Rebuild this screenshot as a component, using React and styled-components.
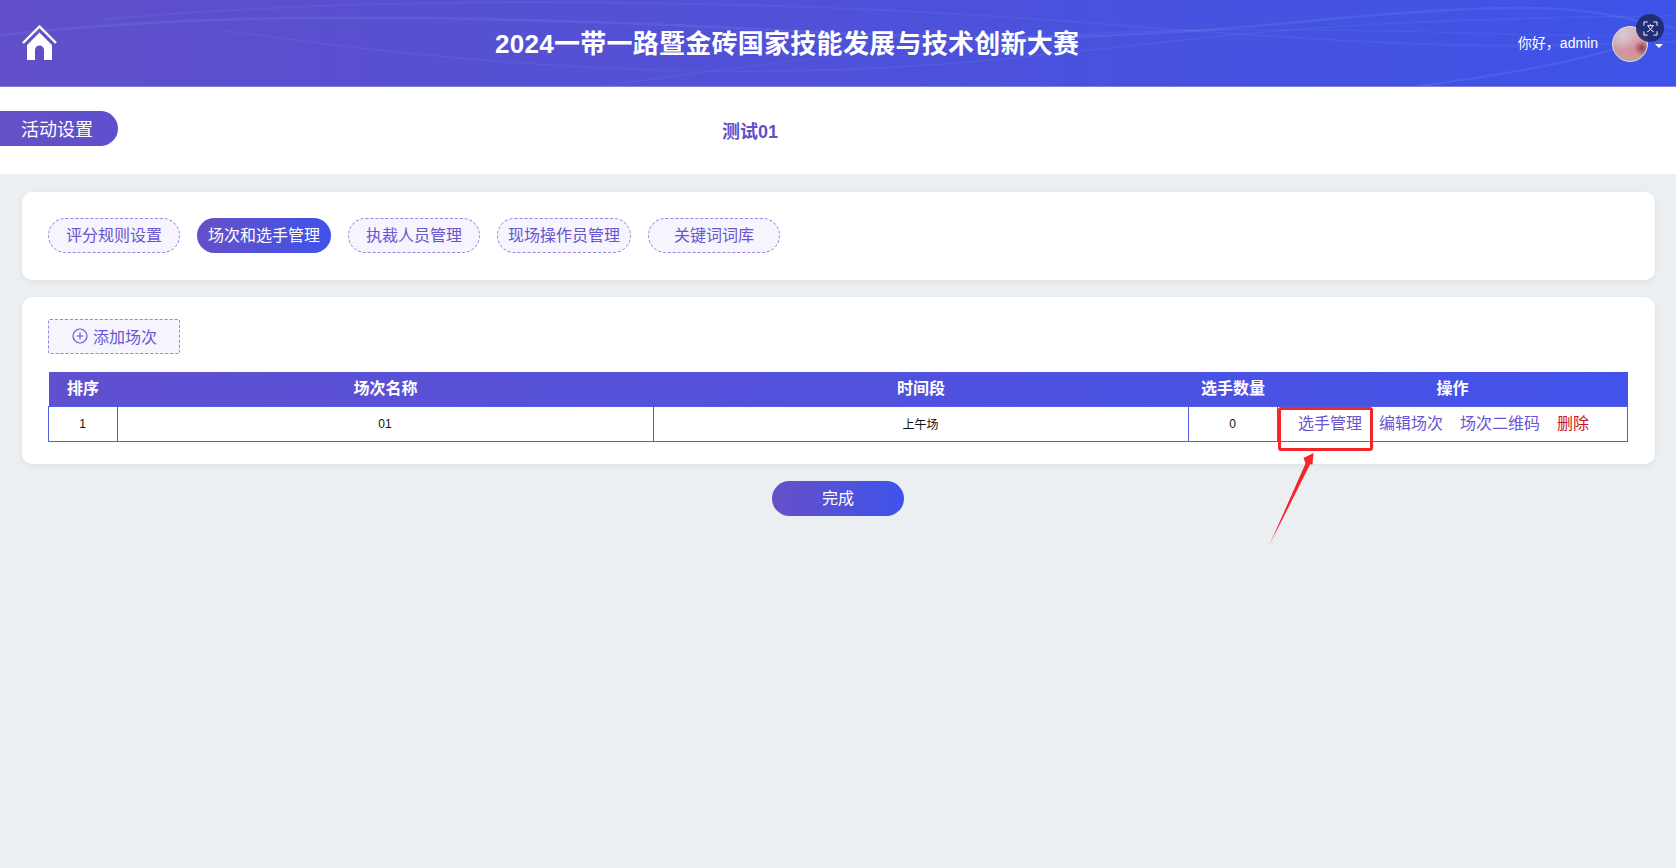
import React from 'react';
import styled, { createGlobalStyle } from 'styled-components';

const GlobalStyle = createGlobalStyle`
  html, body {
    margin: 0;
    padding: 0;
    background: #ebeff2;
    font-family: "Liberation Sans", "Noto Sans CJK SC", sans-serif;
  }
  * { box-sizing: border-box; }
`;

const GRADIENT = 'linear-gradient(90deg, #6650c8 0%, #3f53ea 100%)';

const Page = styled.div`
  width: 1676px;
  height: 868px;
  overflow: hidden;
  position: relative;
  background: #ebeff2;
`;

const Header = styled.header`
  position: relative;
  height: 87px;
  background: linear-gradient(90deg, #614fc9 0%, #3d53e8 100%);
  border-bottom: 1px solid #7f80e4;
  display: flex;
  align-items: center;
  padding: 0 13px 0 22px;
  overflow: hidden;
`;

const Waves = styled.svg`
  position: absolute;
  inset: 0;
  width: 100%;
  height: 100%;
  pointer-events: none;
`;

const HomeLink = styled.a`
  width: 35px;
  height: 36px;
  margin-top: -1px;
  display: block;
  flex: none;
  position: relative;
`;

const Title = styled.h1`
  position: relative;
  margin: 0 0 4px 438px;
  font-size: 26px;
  letter-spacing: 0.27px;
  font-weight: 700;
  color: #fff;
  white-space: nowrap;
`;

const UserArea = styled.div`
  position: relative;
  margin-left: auto;
  display: flex;
  align-items: center;
  color: #fff;
  font-size: 14px;
`;

const Greeting = styled.span`
  margin-bottom: 3px;
`;

const Avatar = styled.div`
  width: 36px;
  height: 36px;
  margin: 2px 0 0 14px;
  border-radius: 50%;
  border: 1px solid #e6dfe6;
  background:
    radial-gradient(circle at 85% 62%, #8c3f4c 0%, transparent 22%),
    radial-gradient(circle at 30% 25%, #d3ccd2 0%, transparent 45%),
    radial-gradient(circle at 55% 65%, #d98ea0 0%, transparent 55%),
    linear-gradient(180deg, #d8b8bf 0%, #cf98a6 65%, #b4ab8c 100%);
`;

const Caret = styled.span`
  width: 0;
  height: 0;
  margin: 6px 0 0 7px;
  border-left: 4px solid transparent;
  border-right: 4px solid transparent;
  border-top: 4px solid #fff;
`;

const FloatingBadge = styled.div`
  position: absolute;
  left: 1636px;
  top: 14px;
  width: 28px;
  height: 28px;
  border-radius: 50%;
  background: rgba(30, 42, 110, 0.92);
  display: flex;
  align-items: center;
  justify-content: center;
`;

const TitleBand = styled.section`
  height: 87px;
  background: #fff;
  padding-top: 24px;
  display: flex;
  align-items: flex-start;
`;

const SectionPill = styled.div`
  width: 118px;
  height: 35px;
  padding: 2px 0 0 21px;
  border-radius: 0 18px 18px 0;
  background: linear-gradient(90deg, #6650c8, #5d50cd);
  color: #fff;
  font-size: 18px;
  line-height: 35px;
`;

const ActivityName = styled.div`
  margin: 9px 0 0 604px;
  font-size: 18px;
  font-weight: 700;
  color: #5f50cb;
  line-height: 24px;
`;

const Main = styled.main`
  padding: 18px 21px 0 22px;
  display: flex;
  flex-direction: column;
  gap: 17px;
`;

const Card = styled.section`
  background: #fff;
  border-radius: 10px;
  box-shadow: 0 2px 6px rgba(0, 0, 0, 0.06);
  padding: ${p => p.$padding};
`;

const TabRow = styled.div`
  display: flex;
  gap: 17px;
`;

const Tab = styled.button`
  height: 35px;
  width: ${p => p.$width}px;
  padding: 0 0 3px;
  border-radius: 18px;
  font: inherit;
  font-size: 16px;
  cursor: pointer;
  color: ${p => (p.$active ? '#fff' : '#6a55d0')};
  background: ${p => (p.$active ? GRADIENT : '#f6f4fd')};
  border: ${p => (p.$active ? 'none' : '1px dashed #9a84e0')};
`;

const AddButton = styled.button`
  width: 132px;
  height: 35px;
  padding: 0 0 1px 1px;
  display: flex;
  align-items: center;
  justify-content: center;
  gap: 5px;
  font: inherit;
  font-size: 16px;
  color: #6a55d0;
  background: #f6f4fd;
  border: 1px dashed #9a84e0;
  border-radius: 2px;
  cursor: pointer;
`;

const Table = styled.table`
  width: 1579px;
  margin-top: 18px;
  border-collapse: collapse;
  table-layout: fixed;
`;

const HeadRow = styled.tr`
  height: 34px;
  background: linear-gradient(90deg, #6050d0 0%, #4353ea 100%);
`;

const Th = styled.th`
  padding: 0 0 3px 0;
  color: #fff;
  font-size: 16px;
  font-weight: 700;
  text-align: center;
`;

const Td = styled.td`
  height: 35px;
  padding: 0 1px 0 0;
  border: 1px solid #4f5fe0;
  font-size: 12px;
  color: #111;
  text-align: center;
`;

const OpsCell = styled.div`
  display: flex;
  gap: 17px;
  margin-top: -3px;
  padding-left: 20px;
  font-size: 16px;
`;

const OpLink = styled.a`
  color: ${p => (p.$danger ? '#c8171e' : '#6a55d0')};
  cursor: pointer;
  white-space: nowrap;
`;

const Footer = styled.div`
  display: flex;
  justify-content: center;
  padding-right: 1px;
`;

const DoneButton = styled.button`
  width: 132px;
  height: 35px;
  padding: 0 0 3px;
  border: none;
  border-radius: 18px;
  background: ${GRADIENT};
  color: #fff;
  font: inherit;
  font-size: 16px;
  cursor: pointer;
`;

const Highlight = styled.div`
  position: absolute;
  left: 1278px;
  top: 407px;
  width: 95px;
  height: 44px;
  border: 3px solid #f5262a;
  border-radius: 3px;
  pointer-events: none;
`;

const Arrow = styled.svg`
  position: absolute;
  left: 1260px;
  top: 448px;
  width: 70px;
  height: 100px;
  pointer-events: none;
`;

const tabs = [
  { label: '评分规则设置', width: 132 },
  { label: '场次和选手管理', width: 134, active: true },
  { label: '执裁人员管理', width: 132 },
  { label: '现场操作员管理', width: 134 },
  { label: '关键词词库', width: 132 },
];

export default function App() {
  return (
    <Page>
      <GlobalStyle />
      <Header>
        <Waves viewBox="0 0 1676 87" preserveAspectRatio="none" fill="none">
          <path d="M0 36 C200 12 420 16 640 24 S1000 52 1300 22 S1600 18 1676 28" stroke="#7fa8f4" strokeOpacity="0.16" strokeWidth="2.5" />
          <path d="M100 20 C400 -8 800 0 1100 24 S1500 50 1676 42" stroke="#7fa8f4" strokeOpacity="0.1" strokeWidth="2" />
          <path d="M220 30 C500 72 760 84 1000 60 S1300 20 1676 16" stroke="#7fa8f4" strokeOpacity="0.12" strokeWidth="1.5" />
          <path d="M600 87 C800 60 1000 30 1240 30 S1560 40 1676 34" stroke="#7fa8f4" strokeOpacity="0.1" strokeWidth="1.5" />
          <path d="M1420 87 C1500 76 1560 66 1620 48" stroke="#7fa8f4" strokeOpacity="0.18" strokeWidth="2" />
        </Waves>
        <HomeLink>
          <svg width="35" height="36" viewBox="0 0 35 36">
            <path d="M1 18 L17.5 1.5 L34 18" fill="none" stroke="#fff" strokeWidth="2.4" />
            <path d="M5 20 L17.5 7.5 L30 20 V35 H22 V25 a4.5 4.5 0 0 0 -9 0 V35 H5 Z" fill="#fff" />
          </svg>
        </HomeLink>
        <Title>2024一带一路暨金砖国家技能发展与技术创新大赛</Title>
        <UserArea>
          <Greeting>你好，admin</Greeting>
          <Avatar />
          <Caret />
        </UserArea>
      </Header>
      <FloatingBadge>
        <svg width="15" height="15" viewBox="0 0 16 16" fill="none" stroke="#fff" strokeWidth="1">
          <path d="M1 5V1H5M11 1H15V5M15 11V15H11M5 15H1V11" />
          <path d="M4.5 5H11.5M8 3.5V5M10.5 5C9.5 8 7 10.5 4.5 11.5M5.5 5C6.5 8 9 10.5 11.5 11.5" />
        </svg>
      </FloatingBadge>
      <TitleBand>
        <SectionPill>活动设置</SectionPill>
        <ActivityName>测试01</ActivityName>
      </TitleBand>
      <Main>
        <Card $padding="26px 27px 27px 26px">
          <TabRow>
            {tabs.map(tab => (
              <Tab key={tab.label} $width={tab.width} $active={tab.active}>{tab.label}</Tab>
            ))}
          </TabRow>
        </Card>
        <Card $padding="22px 27px 22px 26px">
          <AddButton>
            <svg width="16" height="16" viewBox="0 0 16 16" fill="none" stroke="#6a55d0" strokeWidth="1.2">
              <circle cx="8" cy="8" r="7" />
              <path d="M8 4.5V11.5M4.5 8H11.5" />
            </svg>
            添加场次
          </AddButton>
          <Table>
            <colgroup>
              <col width="69" />
              <col width="536" />
              <col width="535" />
              <col width="89" />
              <col width="350" />
            </colgroup>
            <thead>
              <HeadRow>
                <Th>排序</Th>
                <Th>场次名称</Th>
                <Th>时间段</Th>
                <Th>选手数量</Th>
                <Th>操作</Th>
              </HeadRow>
            </thead>
            <tbody>
              <tr>
                <Td>1</Td>
                <Td>01</Td>
                <Td>上午场</Td>
                <Td>0</Td>
                <Td>
                  <OpsCell>
                    <OpLink>选手管理</OpLink>
                    <OpLink>编辑场次</OpLink>
                    <OpLink>场次二维码</OpLink>
                    <OpLink $danger>删除</OpLink>
                  </OpsCell>
                </Td>
              </tr>
            </tbody>
          </Table>
        </Card>
        <Footer>
          <DoneButton>完成</DoneButton>
        </Footer>
      </Main>
      <Highlight />
      <Arrow viewBox="0 0 70 100">
        <defs>
          <linearGradient id="arrowFade" x1="0.1" y1="1" x2="0.8" y2="0">
            <stop offset="0" stopColor="#f5262a" stopOpacity="0.5" />
            <stop offset="0.2" stopColor="#f5262a" />
          </linearGradient>
        </defs>
        <path d="M8.5 99 L45.5 15.5 L43.5 10 L53.5 5 L52.5 16.5 L50 16.5 Z" fill="url(#arrowFade)" />
      </Arrow>
    </Page>
  );
}
